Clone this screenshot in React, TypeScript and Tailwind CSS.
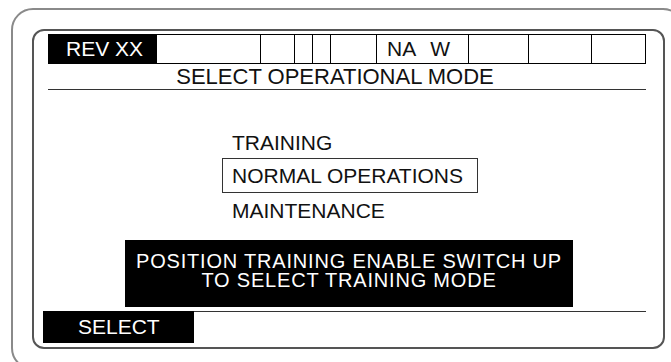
const headerCells = [
  { w: "w-[103px]", border: false, label: "" },
  { w: "w-[34px]", border: true, label: "" },
  { w: "w-[18px]", border: true, label: "" },
  { w: "w-[18px]", border: true, label: "" },
  { w: "w-[46px]", border: true, label: "" },
  { w: "w-[92px]", border: true, label: "NA" },
  { w: "w-[60px]", border: true, label: "" },
  { w: "w-[63px]", border: true, label: "" },
  { w: "w-[54px]", border: true, label: "" },
];

const HeaderRow = () => (
  <div className="ml-[14px] mt-[3px] flex h-[30px] w-[598px] border border-black">
    <div className="w-[108px] bg-black pl-[17px] text-[21px] leading-[28px] text-white">REV XX</div>
    {headerCells.map((c, i) => (
      <div key={i} className={`${c.w} ${c.border ? "border-l border-black" : ""} flex text-[21px] leading-[28px]`}>
        {c.label === "NA" && (
          <>
            <span className="pl-[10px]">NA</span>
            <span className="ml-[14px]">W</span>
          </>
        )}
      </div>
    ))}
  </div>
);

const ModeList = () => (
  <div className="ml-[188px] mt-[41px] text-[21px]">
    <div className="pl-[10px] leading-[24px]">TRAINING</div>
    <div className="mt-[3px] h-[35px] w-[256px] border border-[#333] pl-[9px] leading-[33px]">NORMAL OPERATIONS</div>
    <div className="mt-[6px] pl-[10px] leading-[24px]">MAINTENANCE</div>
  </div>
);

export default function App() {
  return (
    <div className="h-[362px] w-[671px] overflow-hidden bg-white pl-[11px] pt-[8px] font-['Liberation_Sans',Arial,sans-serif] text-[#111]">
      <div className="h-[362px] w-[674px] rounded-[22px] border-2 border-[#8a8a8a] pl-[19px] pt-[19px]">
        <div className="h-[320px] w-[633px] rounded-[12px] border-2 border-[#555]">
          <HeaderRow />
          <div className="ml-[14px] h-[26px] w-[598px] border-b border-[#333] pr-[24px] text-center text-[22px] leading-[25px]">
            SELECT OPERATIONAL MODE
          </div>
          <ModeList />
          <div className="ml-[91px] mt-[17px] h-[67px] w-[448px] bg-black pt-[12px] text-center text-[20px] leading-[19px] tracking-[0.8px] text-white">
            <div>POSITION TRAINING ENABLE SWITCH UP</div>
            <div>TO SELECT TRAINING MODE</div>
          </div>
          <div className="ml-[9px] mt-[4px] flex h-[32px]">
            <div className="w-[151px] bg-black pl-[35px] text-[21px] leading-[32px] text-white">SELECT</div>
            <div className="w-[452px] border-t border-[#333]" />
          </div>
        </div>
      </div>
    </div>
  );
}
